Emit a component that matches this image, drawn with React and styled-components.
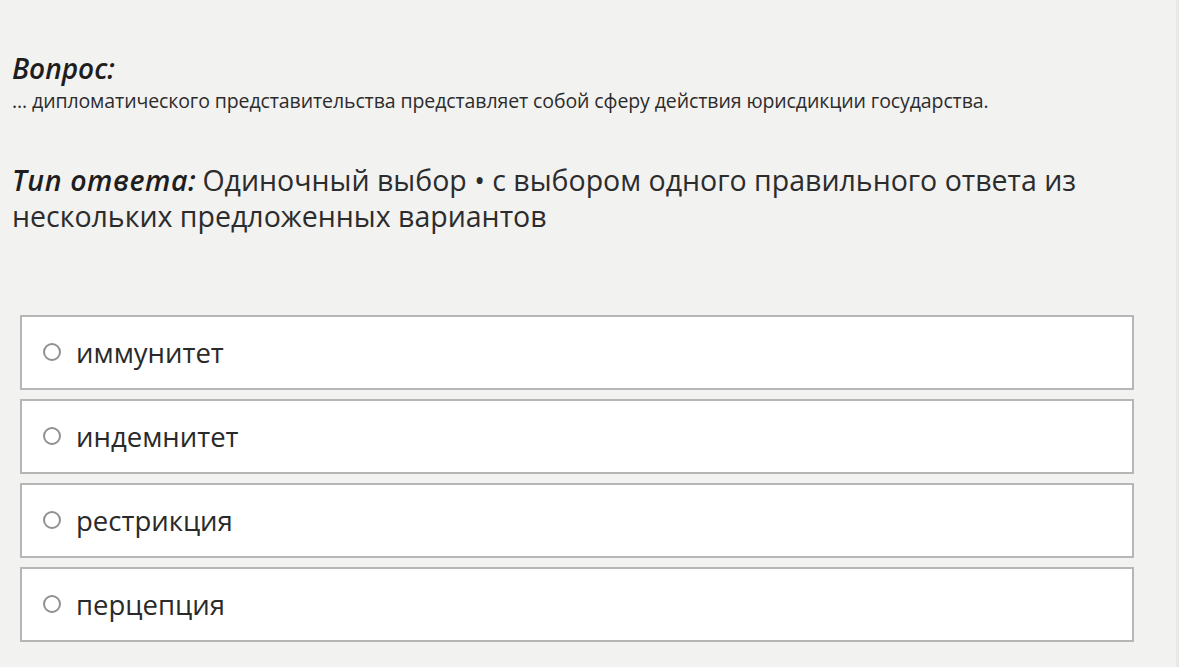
import React from "react";
import styled, { createGlobalStyle } from "styled-components";

const GlobalStyle = createGlobalStyle`
  html, body {
    margin: 0;
    padding: 0;
    background: #f2f2f1;
  }
  body {
    font-family: "Open Sans", "Noto Sans", sans-serif;
    color: #2b2b2b;
  }
`;

const Page = styled.div`
  width: 1179px;
  height: 667px;
  box-sizing: border-box;
  padding: 49px 42px 0 12px;
  overflow: hidden;
  border-right: 3px solid #e9e9e8;
`;

const QuestionLabel = styled.div`
  font-size: 28px;
  font-weight: 600;
  font-style: italic;
  line-height: 38px;
  color: #1e1e1e;
`;

const QuestionText = styled.div`
  margin-top: 1px;
  font-size: 19.5px;
  line-height: 26px;
  color: #2c2c2c;
  letter-spacing: -0.1px;
`;

const AnswerType = styled.div`
  margin-top: 48px;
  font-size: 28.5px;
  line-height: 36px;
  color: #2c2c2c;
  max-width: 1090px;
`;

const TypeLabel = styled.span`
  font-weight: 600;
  font-style: italic;
  color: #1e1e1e;
  letter-spacing: 0.6px;
  margin-right: 6px;
`;

const Options = styled.div`
  margin-top: 81px;
  margin-left: 8px;
  display: flex;
  flex-direction: column;
  gap: 9px;
`;

const Option = styled.label`
  display: flex;
  align-items: center;
  height: 75px;
  box-sizing: border-box;
  padding: 0 0 0 21px;
  background: #ffffff;
  border: 2px solid #b6b6b6;
  font-size: 27.5px;
  color: #2a2a2a;
  cursor: pointer;
`;

const Radio = styled.span`
  width: 18px;
  height: 18px;
  box-sizing: border-box;
  border: 2px solid #919191;
  border-radius: 50%;
  margin-right: 15px;
  margin-top: -2px;
  flex-shrink: 0;
`;

const options = ["иммунитет", "индемнитет", "рестрикция", "перцепция"];

export default function App() {
  return (
    <>
      <GlobalStyle />
      <Page>
        <QuestionLabel>Вопрос:</QuestionLabel>
        <QuestionText>
          ... дипломатического представительства представляет собой сферу
          действия юрисдикции государства.
        </QuestionText>
        <AnswerType>
          <TypeLabel>Тип ответа:</TypeLabel>Одиночный выбор • с выбором
          одного правильного ответа из нескольких предложенных вариантов
        </AnswerType>
        <Options>
          {options.map((o) => (
            <Option key={o}>
              <Radio />
              {o}
            </Option>
          ))}
        </Options>
      </Page>
    </>
  );
}
